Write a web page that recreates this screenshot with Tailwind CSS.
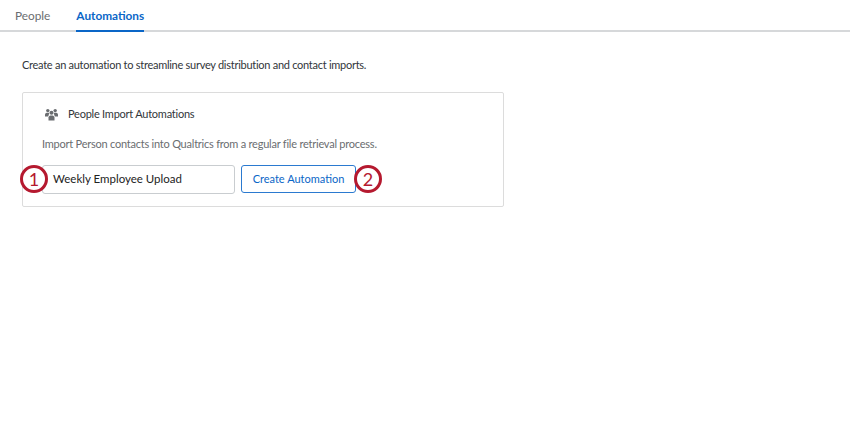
<!DOCTYPE html>
<html><head><meta charset="utf-8"><script src="https://cdn.jsdelivr.net/npm/@tailwindcss/browser@4"></script></head>
<body class="bg-white overflow-hidden font-['Lato',sans-serif]">
<div class="w-[850px] h-[425px] flex flex-col text-[#32363a]">
  <div class="h-[32px] border-b-2 border-[#d6d8da] flex pl-[15px] gap-[26px] text-[11.8px]">
    <div class="text-[#6a6d70] h-[32px] leading-[31px]">People</div>
    <div class="text-[#0a66c7] font-bold h-[32px] leading-[31px] border-b-2 border-[#0a66c7]">Automations</div>
  </div>
  <p class="ml-[22px] mt-[25px] text-[11px] tracking-[-0.27px] leading-[16px]">Create an automation to streamline survey distribution and contact imports.</p>
  <div class="relative ml-[22px] mt-[19px] w-[482px] h-[115px] border border-[#dcdcdc] rounded-[2px] pl-[19px]">
    <div class="flex items-center mt-[13px] h-[16px]">
      <svg class="ml-[3px] w-[13px] h-[13px]" viewBox="0 0 13 13" fill="#6a6d70"><circle cx="2.800" cy="2.600" r="1.700"/><circle cx="10.200" cy="2.600" r="1.700"/><path d="M0 8.500V6.500C0 5.300 1 4.800 2.800 4.800c.7 0 1.200.1 1.500.3L3.200 8.500z"/><path d="M13 8.500V6.500C13 5.300 12 4.800 10.200 4.800c-.7 0-1.200.1-1.500.3L9.800 8.500z"/><circle cx="6.500" cy="4.800" r="2"/><path d="M3.500 12.500V9.500C3.500 8 4.800 7.400 6.500 7.400S9.500 8 9.500 9.500V12.500z"/></svg>
      <span class="ml-[10px] text-[11px] tracking-[-0.24px]">People Import Automations</span>
    </div>
    <p class="mt-[14px] text-[11px] tracking-[-0.23px] leading-[16px] text-[#6a6d70]">Import Person contacts into Qualtrics from a regular file retrieval process.</p>
    <div class="flex mt-[13px] gap-[6px]">
      <div class="w-[193px] h-[29px] border border-[#c9cdd0] rounded-[3px] pl-[10px] text-[11.500px] leading-[26px] text-[#222]">Weekly Employee Upload</div>
      <div class="w-[115px] h-[28px] border border-[#2b7ad0] rounded-[3px] text-center text-[11px] leading-[26px] text-[#0a66c7]">Create Automation</div>
    </div>
    <div class="absolute left-[-3px] top-[72px] w-[28px] h-[28px] rounded-full border-[3px] border-[#b5192f] bg-white text-[#b5192f] text-[18px] leading-[22px] text-center">1</div>
    <div class="absolute left-[331px] top-[72px] w-[28px] h-[28px] rounded-full border-[3px] border-[#b5192f] bg-white text-[#b5192f] text-[18px] leading-[22px] text-center">2</div>
  </div>
</div>
</body></html>
